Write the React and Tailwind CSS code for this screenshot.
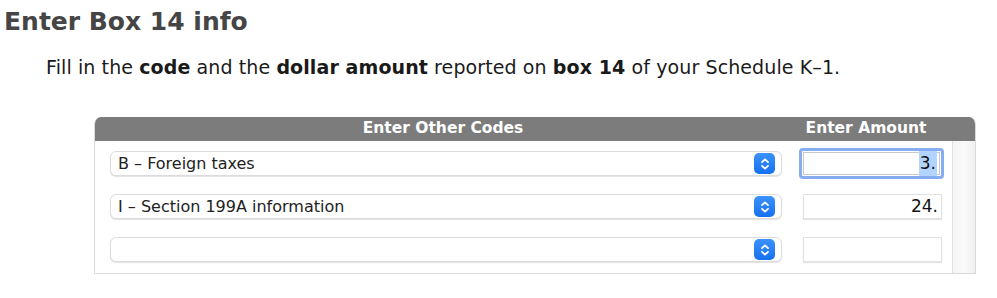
import React from 'react'

const font = { fontFamily: '"DejaVu Sans", "Liberation Sans", sans-serif' }

function Stepper() {
  return (
    <span className="flex h-[21px] w-[21px] items-center justify-center rounded-[5px] bg-gradient-to-b from-[#3b92fb] to-[#1470f0]">
      <svg width="10" height="14" viewBox="0 0 10 14" fill="none" stroke="white" strokeWidth="1.8" strokeLinecap="round" strokeLinejoin="round">
        <path d="M2 5.2 L5 2.4 L8 5.2" />
        <path d="M2 8.8 L5 11.6 L8 8.8" />
      </svg>
    </span>
  )
}

function Row({ code, amount, focused }) {
  return (
    <div className="flex h-[25px] items-center">
      <div className="flex h-[25px] w-[672px] items-center justify-between rounded-[6px] border border-[#dcdcdc] bg-white pl-[7px] pr-[6px] shadow-[0_1px_1px_rgba(0,0,0,0.12)]">
        <span className="text-[16px] text-[#222]">{code}</span>
        <Stepper />
      </div>
      <div className="ml-[21px]">
        {focused ? (
          <div className="-my-[4px] -mx-[4px] rounded-[4px] border-[3px] border-[#86acf2] p-[1px]">
            <div className="flex h-[23px] w-[137px] items-center justify-end border border-[#c8c8c8] bg-white pr-[2px] text-[17px] text-[#111]">
              <span className="bg-[#b3d4fd] px-[1px]">{amount}</span>
            </div>
          </div>
        ) : (
          <div className="flex h-[25px] w-[139px] items-center justify-end border border-[#e2e2e2] bg-white pr-[3px] text-[17px] text-[#111] shadow-[0_1px_1px_rgba(0,0,0,0.1)]">
            {amount}
          </div>
        )}
      </div>
    </div>
  )
}

export default function App() {
  return (
    <div className="h-[298px] w-[997px] bg-white" style={font}>
      <h1 className="pl-[4px] pt-[6px] text-[25px] font-bold leading-[32px] text-[#454545]">Enter Box 14 info</h1>
      <p className="mt-[16px] pl-[46px] text-[19px] leading-[26px] tracking-[0.1px] text-[#1a1a1a]">
        Fill in the <b>code</b> and the <b>dollar amount</b> reported on <b>box 14</b> of your Schedule K–1.
      </p>

      <div className="ml-[94px] mt-[37px] w-[882px] overflow-hidden rounded-t-[7px] border-x border-b border-[#dadada]">
        <div className="flex h-[24px] items-center bg-[#7c7c7c] text-[15.5px] font-bold text-white">
          <div className="w-[696px] text-center">Enter Other Codes</div>
          <div className="w-[150px] text-center">Enter Amount</div>
        </div>
        <div className="flex">
          <div className="flex flex-1 flex-col gap-[18px] pl-[15px] pb-[11px] pt-[10px]">
            <Row code="B – Foreign taxes" amount="3." focused />
            <Row code="I – Section 199A information" amount="24." />
            <Row code="" amount="" />
          </div>
          <div className="w-[23px] border-l border-[#e0e0e0] bg-gradient-to-r from-[#f4f4f4] via-[#fafafa] to-[#f0f0f0]" />
        </div>
      </div>
    </div>
  )
}
